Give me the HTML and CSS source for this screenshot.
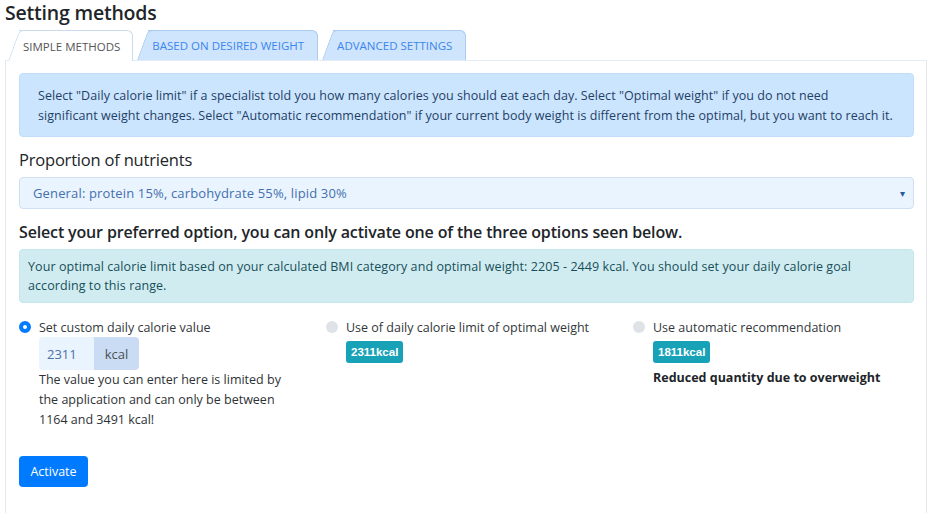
FILE: index.html
```html
<!DOCTYPE html>
<html lang="en">
<head>
<meta charset="utf-8">
<title>Setting methods</title>
<link rel="stylesheet" href="styles.css">
</head>
<body>
<h1 class="title">Setting methods</h1>
<div class="tabs">
  <div class="tab tab-active">SIMPLE METHODS</div>
  <div class="tab">BASED ON DESIRED WEIGHT</div>
  <div class="tab">ADVANCED SETTINGS</div>
</div>
<div class="card">
  <div class="alert alert-blue">Select "Daily calorie limit" if a specialist told you how many calories you should eat each day. Select "Optimal weight" if you do not need<br>significant weight changes. Select "Automatic recommendation" if your current body weight is different from the optimal, but you want to reach it.</div>
  <h2 class="label">Proportion of nutrients</h2>
  <div class="select"><span>General: protein 15%, carbohydrate 55%, lipid 30%</span><span class="caret">▾</span></div>
  <h2 class="label label-strong">Select your preferred option, you can only activate one of the three options seen below.</h2>
  <div class="alert alert-teal">Your optimal calorie limit based on your calculated BMI category and optimal weight: 2205 - 2449 kcal. You should set your daily calorie goal according to this range.</div>
  <div class="options">
    <div class="option">
      <div class="radio-line"><span class="radio radio-on"></span><span>Set custom daily calorie value</span></div>
      <div class="option-body">
        <div class="input-group"><span class="input">2311</span><span class="addon">kcal</span></div>
        <p class="help">The value you can enter here is limited by the application and can only be between 1164 and 3491 kcal!</p>
      </div>
    </div>
    <div class="option">
      <div class="radio-line"><span class="radio"></span><span>Use of daily calorie limit of optimal weight</span></div>
      <div class="option-body"><span class="badge">2311kcal</span></div>
    </div>
    <div class="option">
      <div class="radio-line"><span class="radio"></span><span>Use automatic recommendation</span></div>
      <div class="option-body"><span class="badge">1811kcal</span>
        <p class="note">Reduced quantity due to overweight</p></div>
    </div>
  </div>
  <button class="btn">Activate</button>
</div>
</body>
</html>
```
FILE: styles.css
```css
* { box-sizing: border-box; }
body {
  margin: 0;
  background: #fff;
  font-family: "Open Sans", "Noto Sans", sans-serif;
  color: #212529;
  width: 928px;
  height: 513px;
  overflow: hidden;
}
.title {
  margin: 0;
  padding: 1px 0 0 5px;
  height: 30px;
  font-size: 19.5px;
  font-weight: 600;
  line-height: 24px;
  color: #212529;
  letter-spacing: -0.2px;
}
.tabs {
  display: flex;
  gap: 4px;
  height: 30px;
  padding-left: 8px;
}
.tab {
  position: relative;
  height: 30px;
  margin-left: 11px;
  padding: 0 13px 0 4px;
  display: flex;
  align-items: center;
  font-size: 11.5px;
  color: #3a86ee;
  background: #cfe4fd;
  border: 1px solid #a9cbf1;
  border-left: none;
  border-bottom: none;
  border-top-right-radius: 6px;
  z-index: 1;
}
.tab::before {
  content: "";
  position: absolute;
  top: -1px;
  bottom: 0;
  left: -11px;
  width: 20px;
  background: inherit;
  border-top: 1px solid #a9cbf1;
  border-left: 1px solid #a9cbf1;
  border-top-left-radius: 5px;
  transform: skewX(-20deg);
  transform-origin: bottom left;
  z-index: -1;
}
.tab-active {
  background: #fff;
  color: #555;
  border-color: #c9dcee;
  height: 31px;
  padding-right: 12px;
  z-index: 2;
}
.tab-active::before { border-color: #c9dcee; }
.card {
  margin-left: 5px;
  width: 922px;
  height: 453px;
  border: 1px solid #e6e9ec;
  border-bottom: none;
  border-top-color: #e3ecf5;
  padding: 12px 12px 0 13px;
}
.alert {
  border-radius: 4px;
  font-size: 12.5px;
}
.alert-blue {
  background: #cce5ff;
  color: #1f3f66;
  padding: 12px 10px 10px 18px;
  line-height: 20px;
  border: 1px solid #c2ddfa;
  letter-spacing: 0.05px;
}
.alert-teal {
  background: #d1ecf1;
  color: #174f59;
  padding: 7px 20px 7px 8px;
  line-height: 19px;
  border: 1px solid #c5e6ec;
  letter-spacing: 0.08px;
}
.label {
  margin: 12px 0 6px;
  font-size: 16.5px;
  font-weight: 500;
  line-height: 22px;
  letter-spacing: -0.2px;
  color: #212529;
}
.label-strong {
  margin: 12px 0 6px;
  font-size: 16px;
  font-weight: 600;
  letter-spacing: -0.15px;
}
.select {
  height: 32px;
  display: flex;
  align-items: center;
  justify-content: space-between;
  padding: 0 8px 0 13px;
  background: #eaf4ff;
  border: 1px solid #cfe0f2;
  border-radius: 4px;
  font-size: 13px;
  color: #4470ad;
  letter-spacing: 0.15px;
}
.caret { font-size: 10px; color: #2b5a99; }
.options {
  display: grid;
  grid-template-columns: 307px 307px 1fr;
  margin-top: 15px;
  font-size: 12.5px;
  letter-spacing: 0;
}
.radio-line {
  display: flex;
  align-items: center;
  gap: 8px;
  height: 18px;
  color: #33373b;
}
.radio {
  width: 12px;
  height: 12px;
  border-radius: 50%;
  background: #dfe3e7;
  flex: none;
}
.radio-on {
  background: #fff;
  border: 4px solid #007bff;
}
.option-body { padding-left: 20px; }
.input-group {
  display: flex;
  width: 100px;
  height: 33px;
  margin-top: 1px;
  border-radius: 4px;
  overflow: hidden;
}
.input {
  width: 55px;
  display: flex;
  align-items: center;
  padding-left: 8px;
  background: #eaf4ff;
  color: #4b70a6;
  font-size: 13px;
}
.addon {
  flex: 1;
  display: flex;
  align-items: center;
  justify-content: center;
  background: #cadcf3;
  color: #4a5058;
  font-size: 13px;
}
.help {
  margin: 0;
  width: 252px;
  line-height: 20px;
  color: #2e3236;
}
.badge {
  display: inline-block;
  margin-top: 5px;
  height: 22px;
  line-height: 22px;
  padding: 0 5px;
  border-radius: 3px;
  background: #17a2b8;
  color: #fff;
  font-family: "Liberation Sans", Arial, sans-serif;
  font-size: 11.5px;
  font-weight: 700;
}
.note {
  margin: 5px 0 0;
  font-weight: 700;
  color: #212529;
  line-height: 20px;
}
.btn {
  margin-top: 26px;
  width: 69px;
  height: 31px;
  border: none;
  border-radius: 4px;
  background: #007bff;
  color: #fff;
  font-family: "Open Sans", sans-serif;
  font-size: 12.5px;
  padding: 0;
}
```
